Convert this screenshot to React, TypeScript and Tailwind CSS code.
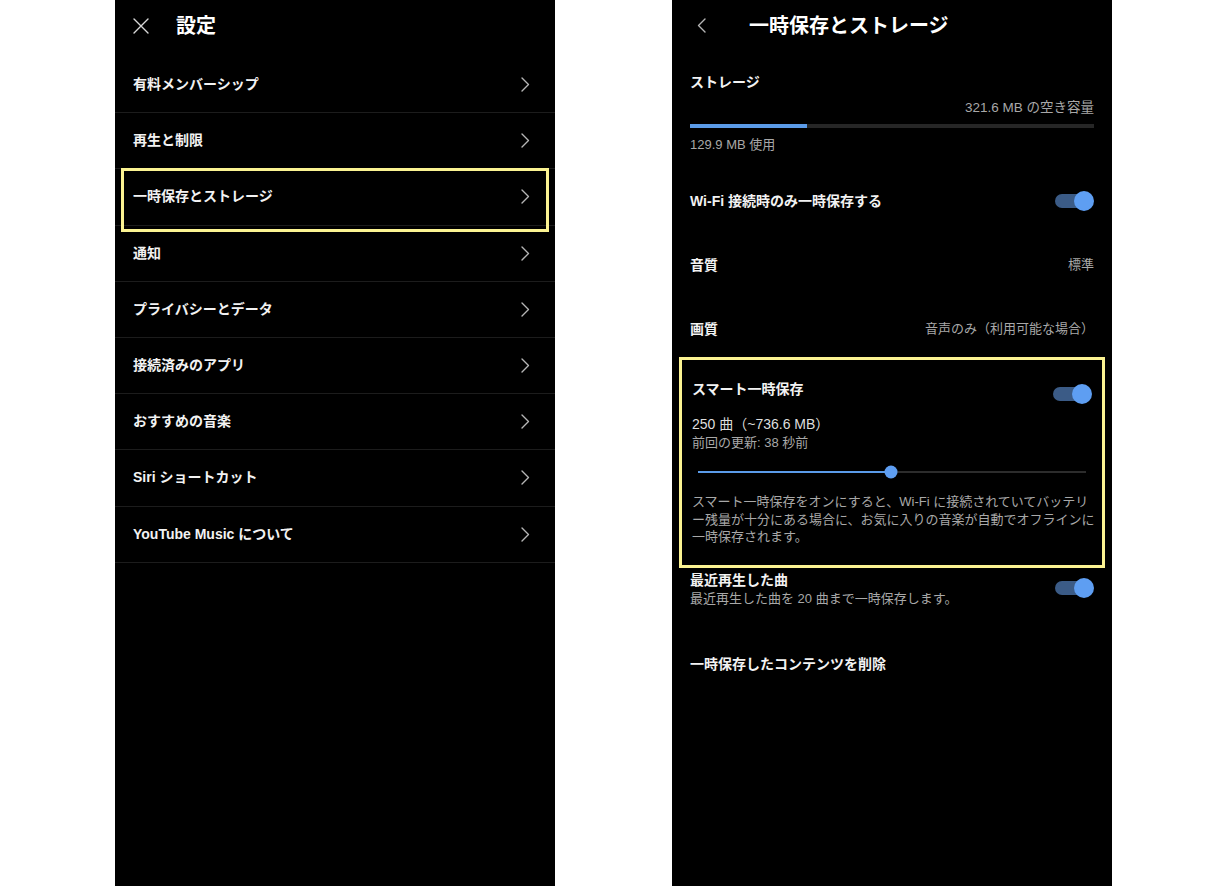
import React from 'react';

const font = { fontFamily: '"Liberation Sans", "Noto Sans CJK JP", sans-serif' };

const menuItems = [
  '有料メンバーシップ',
  '再生と制限',
  '一時保存とストレージ',
  '通知',
  'プライバシーとデータ',
  '接続済みのアプリ',
  'おすすめの音楽',
  'Siri ショートカット',
  'YouTube Music について',
];

const Chevron: React.FC<{ left?: boolean }> = ({ left }) => (
  <svg width="9" height="15" viewBox="0 0 9 15" fill="none" stroke="#b5b5b5" strokeWidth={1.4} strokeLinecap="round" strokeLinejoin="round">
    {left ? <path d="M8 1 L1.5 7.5 L8 14" /> : <path d="M1 1 L7.5 7.5 L1 14" />}
  </svg>
);

const Toggle: React.FC = () => (
  <div className="relative w-[39px] h-[20px] shrink-0">
    <div className="absolute left-0 top-[3px] w-[32px] h-[14px] rounded-full bg-[#3b5b86]" />
    <div className="absolute right-0 top-0 w-[20px] h-[20px] rounded-full bg-[#5e9ef2]" />
  </div>
);

const SettingsPanel: React.FC = () => (
  <div className="relative w-[440px] h-full bg-black">
    <div className="h-[57px] pb-[5px] flex items-center pl-[18px]">
      <svg width="16" height="16" viewBox="0 0 16 16" stroke="#d8d8d8" strokeWidth={1.4} strokeLinecap="round">
        <path d="M1 1 L15 15 M15 1 L1 15" />
      </svg>
      <h1 className="ml-[27px] text-[20px] font-bold text-white leading-none">設定</h1>
    </div>
    <div>
      {menuItems.map(item => (
        <div key={item} className="h-[56.2px] border-b border-[#1c1c1c] flex items-center justify-between pl-[18px] pr-[25px]">
          <span className="text-[14px] font-semibold text-[#f2f2f2]">{item}</span>
          <Chevron />
        </div>
      ))}
    </div>
    {/* highlight annotation */}
    <div className="absolute left-[6px] top-[168px] w-[428px] h-[64px] border-[3px] border-[#fbf392] pointer-events-none" />
  </div>
);

const StoragePanel: React.FC = () => (
  <div className="relative w-[440px] h-full bg-black">
    <div className="h-[55px] pb-[4px] flex items-center pl-[25px]">
      <Chevron left />
      <h1 className="ml-[43px] text-[20px] font-bold text-white leading-none">一時保存とストレージ</h1>
    </div>

    <div className="px-[18px]">
      <div className="mt-[17px] text-[14px] leading-[20px] font-semibold text-[#f2f2f2]">ストレージ</div>
      <div className="mt-[7px] text-[13.5px] leading-[18px] text-[#a8a8a8] text-right">321.6 MB の空き容量</div>
      <div className="mt-[7px] h-[4px] bg-[#262626] flex">
        <div className="w-[29%] h-full bg-[#5b9be8]" />
      </div>
      <div className="mt-[8px] text-[13px] leading-[18px] text-[#a8a8a8]">129.9 MB 使用</div>

      <div className="mt-[15px] h-[64px] flex items-center justify-between">
        <span className="text-[14px] font-semibold text-[#f2f2f2]">Wi-Fi 接続時のみ一時保存する</span>
        <Toggle />
      </div>
      <div className="h-[64px] flex items-center justify-between">
        <span className="text-[14px] font-semibold text-[#f2f2f2]">音質</span>
        <span className="text-[13px] text-[#a8a8a8]">標準</span>
      </div>
      <div className="h-[64px] flex items-center justify-between">
        <span className="text-[14px] font-semibold text-[#f2f2f2]">画質</span>
        <span className="text-[13px] text-[#a8a8a8]">音声のみ（利用可能な場合）</span>
      </div>
    </div>

    <div className="px-[20px] mt-[18px]">
      <div className="h-[25px] flex items-start justify-between">
        <span className="text-[14px] leading-[20px] font-semibold text-[#f2f2f2]">スマート一時保存</span>
        <div className="mt-[5px]"><Toggle /></div>
      </div>
      <div className="mt-[11px] text-[14px] leading-[18px] text-[#dedede]">250 曲（~736.6 MB）</div>
      <div className="mt-[1px] text-[13px] leading-[17px] text-[#a8a8a8]">前回の更新: 38 秒前</div>
      <div className="mt-[13px] mx-[6px] h-[16px] flex items-center">
        <div className="relative w-full h-[2px] bg-[#2c2c2c]">
          <div className="absolute left-0 top-0 h-[2px] w-[49.7%] bg-[#5b9be8]" />
          <div className="absolute left-[49.7%] top-1/2 -translate-x-1/2 -translate-y-1/2 w-[13px] h-[13px] rounded-full bg-[#5e9ef2]" />
        </div>
      </div>
      <p className="mt-[13px] text-[13px] leading-[17.5px] text-[#a8a8a8] whitespace-nowrap">
        スマート一時保存をオンにすると、Wi-Fi に接続されていてバッテリ<br />
        ー残量が十分にある場合に、お気に入りの音楽が自動でオフラインに<br />
        一時保存されます。
      </p>
    </div>

    <div className="px-[18px] mt-[24px]">
      <div className="flex items-center justify-between">
        <div>
          <div className="text-[14px] leading-[20px] font-semibold text-[#f2f2f2]">最近再生した曲</div>
          <div className="text-[13px] leading-[17px] text-[#a8a8a8]">最近再生した曲を 20 曲まで一時保存します。</div>
        </div>
        <Toggle />
      </div>
      <div className="mt-[47px] text-[14px] leading-[20px] font-semibold text-[#f2f2f2]">一時保存したコンテンツを削除</div>
    </div>

    {/* highlight annotation */}
    <div className="absolute left-[7px] top-[357px] w-[426px] h-[211px] border-[3px] border-[#fbf392] pointer-events-none" />
  </div>
);

export default function App() {
  return (
    <div className="w-[1226px] h-[886px] bg-white flex overflow-hidden" style={font}>
      <div className="ml-[115px] h-full">
        <SettingsPanel />
      </div>
      <div className="ml-[117px] h-full">
        <StoragePanel />
      </div>
    </div>
  );
}
